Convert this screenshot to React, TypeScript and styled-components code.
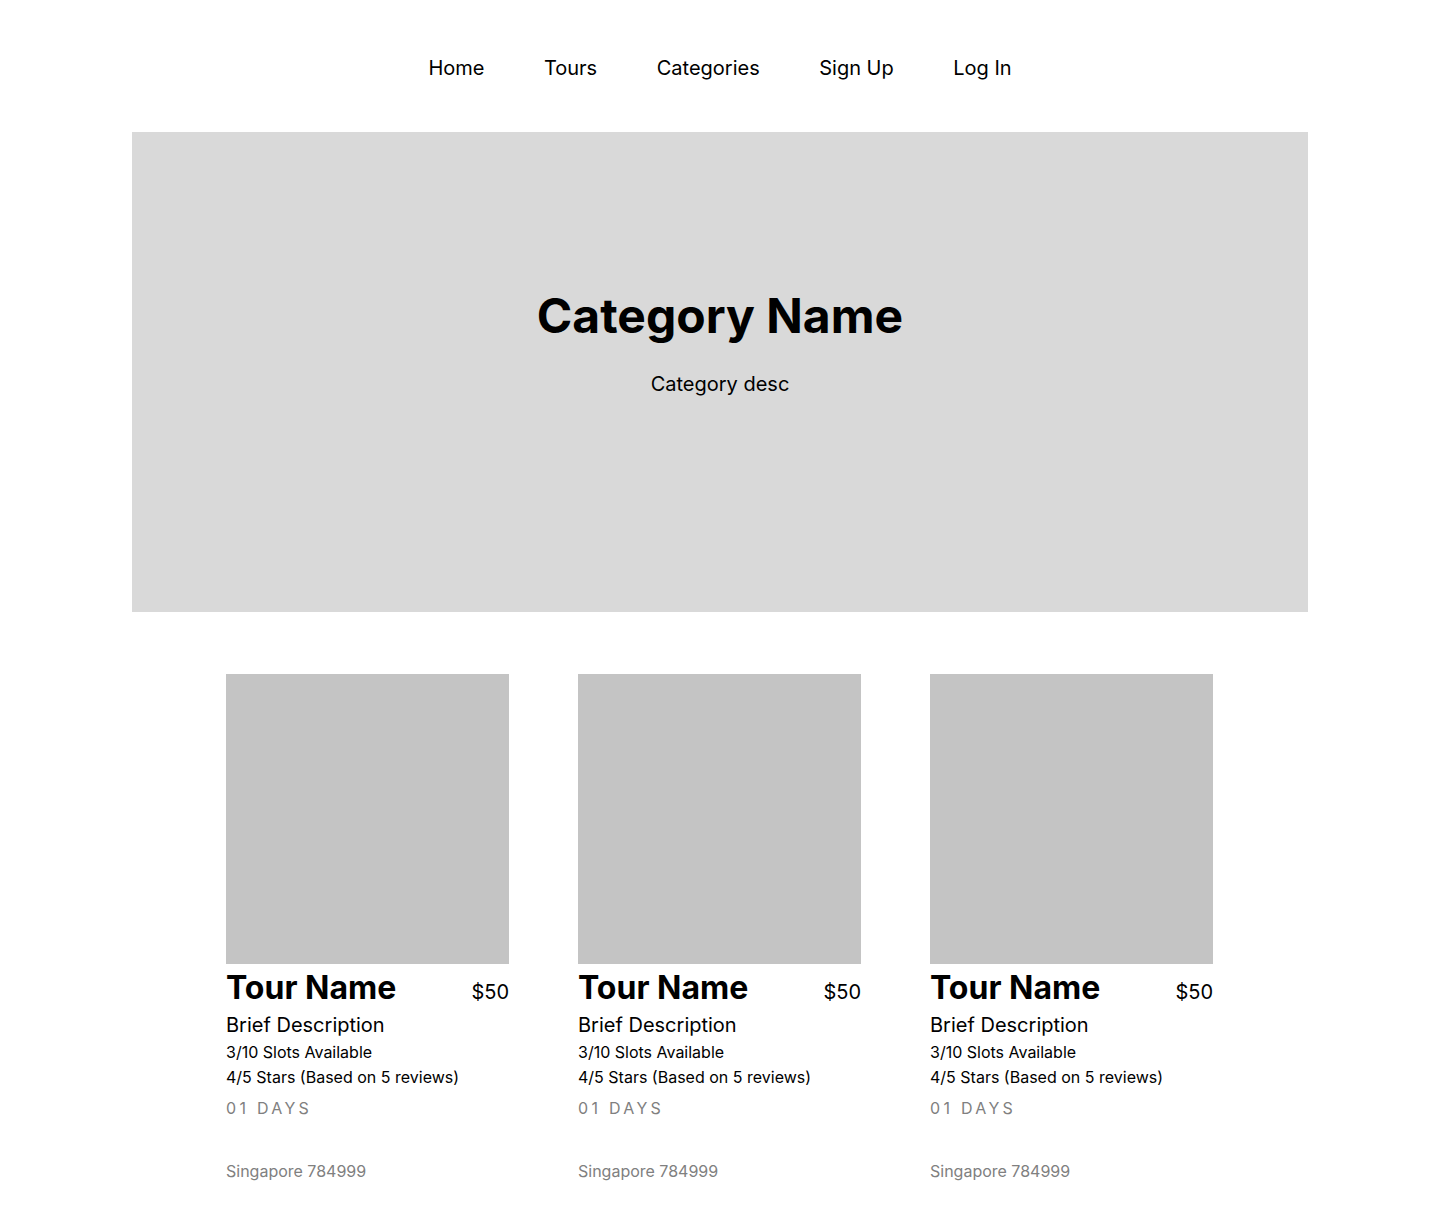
import React from 'react';
import styled, { createGlobalStyle } from 'styled-components';

const GlobalStyle = createGlobalStyle`
  body {
    margin: 0;
    background: #ffffff;
    font-family: Inter, "Noto Sans", sans-serif;
    color: #000000;
  }
`;

const Nav = styled.nav`
  display: flex;
  justify-content: center;
  gap: 59.5px;
  padding: 56px 0 52px;
`;

const NavLink = styled.a`
  font-size: 20px;
  line-height: 24px;
  color: #000;
  text-decoration: none;
`;

const Hero = styled.section`
  margin: 0 132px;
  height: 480px;
  box-sizing: border-box;
  padding-top: 155px;
  background: #d9d9d9;
  display: flex;
  flex-direction: column;
  align-items: center;
`;

const HeroTitle = styled.h1`
  margin: 0;
  font-size: 48px;
  line-height: 58px;
  font-weight: 700;
`;

const HeroDesc = styled.p`
  margin: 27px 0 0;
  font-size: 20px;
  line-height: 24px;
`;

const CardGrid = styled.div`
  display: grid;
  grid-template-columns: repeat(3, 283px);
  column-gap: 69px;
  justify-content: start;
  padding: 62px 0 40px 226px;
`;

const Card = styled.article`
  display: flex;
  flex-direction: column;
`;

const CardImage = styled.div`
  width: 283px;
  height: 290px;
  background: #c4c4c4;
`;

const TitleRow = styled.div`
  display: flex;
  justify-content: space-between;
  align-items: baseline;
  margin-top: 5px;
`;

const TourName = styled.h2`
  margin: 0;
  font-size: 32px;
  line-height: 38px;
  font-weight: 700;
`;

const Price = styled.span`
  font-size: 20px;
  line-height: 24px;
`;

const Brief = styled.p`
  margin: 6px 0 0;
  font-size: 20px;
  line-height: 24px;
`;

const Detail = styled.p<{ $top?: number }>`
  margin: ${(p) => p.$top ?? 0}px 0 0;
  font-size: 16px;
  line-height: 25px;
`;

const Muted = styled.p<{ $spaced?: boolean; $top: number }>`
  margin: ${(p) => p.$top}px 0 0;
  font-size: 16px;
  line-height: 20px;
  color: #808080;
  letter-spacing: ${(p) => (p.$spaced ? '3.3px' : 'normal')};
`;

const navItems = ['Home', 'Tours', 'Categories', 'Sign Up', 'Log In'];

const tours = [1, 2, 3].map((id) => ({
  id,
  name: 'Tour Name',
  price: '$50',
  brief: 'Brief Description',
  slots: '3/10 Slots Available',
  stars: '4/5 Stars (Based on 5 reviews)',
  days: '01 DAYS',
  location: 'Singapore 784999',
}));

const App: React.FC = () => {
  return (
    <>
      <GlobalStyle />
      <Nav>
        {navItems.map((item) => (
          <NavLink href="#" key={item}>
            {item}
          </NavLink>
        ))}
      </Nav>
      <Hero>
        <HeroTitle>Category Name</HeroTitle>
        <HeroDesc>Category desc</HeroDesc>
      </Hero>
      <CardGrid>
        {tours.map((tour) => (
          <Card key={tour.id}>
            <CardImage />
            <TitleRow>
              <TourName>{tour.name}</TourName>
              <Price>{tour.price}</Price>
            </TitleRow>
            <Brief>{tour.brief}</Brief>
            <Detail $top={3}>{tour.slots}</Detail>
            <Detail>{tour.stars}</Detail>
            <Muted $spaced $top={8}>
              {tour.days}
            </Muted>
            <Muted $top={43}>{tour.location}</Muted>
          </Card>
        ))}
      </CardGrid>
    </>
  );
};

export default App;
